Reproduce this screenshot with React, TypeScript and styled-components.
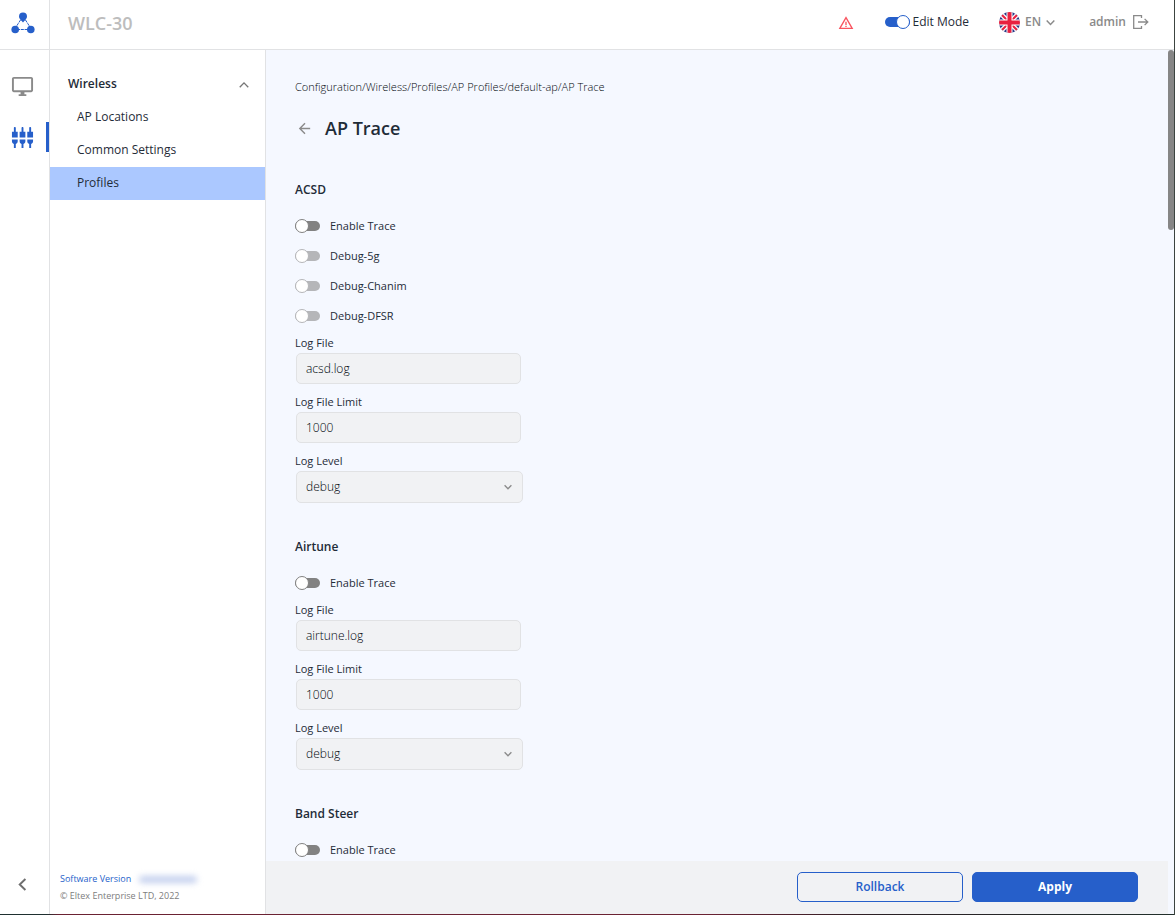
import React, { useState } from 'react';
import styled, { createGlobalStyle, css } from 'styled-components';
import {
  MdArrowBack,
  MdOutlineDesktopWindows,
  MdSettingsInputComponent,
  MdWarningAmber,
} from 'react-icons/md';

const color = {
  blue: '#265fca',
  ink: '#1f2c38',
  deepInk: '#00060c',
  grey: '#8a8a8a',
  line: '#e1e2e4',
  canvas: '#f5f8ff',
  field: '#f1f2f4',
  selected: '#abc8ff',
};

const GlobalStyle = createGlobalStyle`
  *, *::before, *::after { box-sizing: border-box; }
  body {
    margin: 0;
    background: #fff;
    color: ${color.ink};
    font-family: 'Open Sans', 'Noto Sans', sans-serif;
    font-size: 12px;
    line-height: 16px;
  }
  button, input, select { font: inherit; color: inherit; }
`;

const Frame = styled.div`
  display: flex;
  flex-direction: column;
  height: 100vh;
  border-right: 1px solid #3c4440;
`;

const WindowEdge = styled.div`
  flex: none;
  height: 1px;
  background: linear-gradient(90deg, #1f3030 0, #1f3030 4%, #6b2233 5%, #6b2233 60%, #2a2024 75%, #22302c 100%);
`;

const Header = styled.header`
  flex: none;
  display: flex;
  height: 50px;
  border-bottom: 1px solid ${color.line};
`;

const LogoCell = styled.a`
  display: flex;
  align-items: center;
  justify-content: center;
  width: 50px;
  padding: 0 4px 3px 0;
  border-right: 1px solid ${color.line};
`;

const Product = styled.div`
  flex: 1;
  padding: 11px 0 0 18px;
  color: #bdbdbd;
  font-size: 18px;
  font-weight: 600;
  line-height: 24px;
`;

const HeaderTools = styled.div`
  display: flex;
  align-items: center;
  height: 44px;
  padding-right: 25px;
`;

const AlertButton = styled.button`
  display: flex;
  margin-right: 31px;
  padding: 2px 0 0;
  border: 0;
  background: none;
  color: #f9545f;
`;

const EditMode = styled.label`
  display: flex;
  align-items: center;
  gap: 3px;
  margin-right: 30px;
`;

const ToolButton = styled.button`
  display: flex;
  align-items: center;
  gap: 5px;
  padding: 0;
  border: 0;
  background: none;
  color: ${color.grey};
  font-size: 12px;
  font-weight: 600;
`;

const LanguageButton = styled(ToolButton)`
  margin-right: 34px;
`;

const LogoutButton = styled(ToolButton)`
  gap: 7px;
`;

const Body = styled.div`
  flex: 1;
  display: flex;
  min-height: 0;
`;

const Rail = styled.nav`
  flex: none;
  display: flex;
  flex-direction: column;
  width: 50px;
  padding-top: 21px;
  border-right: 1px solid ${color.line};
`;

const RailLink = styled.a<{ $active?: boolean }>`
  display: flex;
  align-items: center;
  justify-content: center;
  height: 30px;
  margin-bottom: 21px;
  padding-right: ${(p) => (p.$active ? 1 : 4)}px;
  color: ${(p) => (p.$active ? color.blue : color.grey)};
  ${(p) =>
    p.$active &&
    css`
      border-right: 3px solid ${color.blue};
      border-radius: 2px 0 0 2px;
    `}
`;

const CollapseButton = styled.button`
  display: flex;
  justify-content: center;
  margin: auto 0 23px;
  padding: 0 4px 0 0;
  border: 0;
  background: none;
  color: #6f6f6f;
`;

const Sidebar = styled.aside`
  flex: none;
  display: flex;
  flex-direction: column;
  width: 216px;
  padding-top: 18px;
  border-right: 1px solid ${color.line};
`;

const GroupButton = styled.button`
  display: flex;
  align-items: center;
  justify-content: space-between;
  height: 33px;
  padding: 0 16px 2px 18px;
  border: 0;
  background: none;
  font-weight: 600;
  text-align: left;

  svg {
    margin-top: 2px;
    color: #777;
  }
`;

const MenuLink = styled.a<{ $active?: boolean }>`
  display: flex;
  align-items: center;
  height: 33px;
  padding: 0 27px 2px;
  background: ${(p) => (p.$active ? color.selected : 'transparent')};
  color: inherit;
  text-decoration: none;
`;

const About = styled.div`
  margin-top: auto;
  padding: 0 10px 10px;
  color: #7d7d7d;
  font-size: 9px;
`;

const Version = styled.div`
  display: flex;
  align-items: center;
  gap: 8px;
  margin-bottom: 1px;
  color: ${color.blue};
  font-weight: 500;
`;

const HiddenBuild = styled.span`
  width: 58px;
  height: 7px;
  border-radius: 4px;
  background: #c3cfee;
  filter: blur(3px);
`;

const Main = styled.main`
  flex: 1;
  display: flex;
  flex-direction: column;
  min-width: 0;
  background: ${color.canvas};
`;

const Content = styled.div`
  flex: 1;
  min-height: 0;
  overflow: hidden;
  padding: 29px 29px 0;
`;

const Breadcrumbs = styled.nav`
  color: ${color.deepInk};
  font-size: 11px;
  font-weight: 300;

  a {
    color: inherit;
    text-decoration: none;
  }
`;

const TitleRow = styled.div`
  display: flex;
  align-items: center;
  gap: 12px;
  margin-top: 21px;
`;

const BackLink = styled.a`
  display: flex;
  padding-left: 1px;
  color: ${color.grey};
`;

const Title = styled.h1`
  margin: 0;
  font-size: 18px;
  font-weight: 600;
  line-height: 24px;
`;

const Section = styled.section`
  margin-top: 36px;
`;

const FirstSection = styled(Section)`
  margin-top: 42px;
`;

const SectionTitle = styled.h2`
  margin: 0 0 13px;
  font-size: 12px;
  font-weight: 600;
  line-height: 16px;
`;

const SwitchRow = styled.label`
  display: flex;
  align-items: center;
  gap: 10px;
  height: 30px;
  font-size: 11px;
  font-weight: 500;
`;

const Switch = styled.input`
  appearance: none;
  flex: none;
  display: grid;
  align-items: center;
  width: 25px;
  height: 14px;
  margin: 0;
  color: #828282;

  &::before,
  &::after {
    content: '';
    grid-area: 1 / 1;
  }
  &::before {
    height: 10px;
    border-radius: 5px;
    background: currentColor;
  }
  &::after {
    width: 14px;
    height: 14px;
    border: 1px solid currentColor;
    border-radius: 50%;
    background: #fff;
  }
  &:checked {
    color: ${color.blue};
  }
  &:checked::after {
    justify-self: end;
  }
  &:disabled {
    color: #b5b6b9;
  }
`;

const Fields = styled.div`
  padding-top: 4px;
`;

const Field = styled.div`
  display: flex;
  flex-direction: column;
  margin-bottom: 10px;
`;

const FieldLabel = styled.label`
  margin-bottom: 2px;
  font-size: 11px;
  font-weight: 500;
`;

const controlStyle = css`
  height: 31px;
  padding: 0 9px;
  border: 1px solid ${color.line};
  border-radius: 5px;
  background: ${color.field};
  color: ${color.deepInk};
  font-weight: 300;
`;

const TextInput = styled.input`
  ${controlStyle}
  width: 225px;
  margin: 0 0 0 1px;
`;

const SelectBox = styled.div`
  position: relative;
  width: 227px;
  margin-left: 1px;

  svg {
    position: absolute;
    top: 12px;
    right: 11px;
    color: ${color.grey};
    pointer-events: none;
  }
`;

const Select = styled.select`
  ${controlStyle}
  appearance: none;
  width: 100%;
  height: 32px;
`;

const Footer = styled.footer`
  flex: none;
  display: flex;
  justify-content: flex-end;
  gap: 9px;
  height: 53px;
  padding: 11px 30px 0 0;
  background: ${color.field};
`;

const ActionButton = styled.button<{ $primary?: boolean }>`
  width: 166px;
  height: 30px;
  padding: 0;
  border: 1px solid ${color.blue};
  border-radius: 5px;
  background: ${(p) => (p.$primary ? color.blue : 'transparent')};
  color: ${(p) => (p.$primary ? '#fff' : color.blue)};
  font-weight: ${(p) => (p.$primary ? 700 : 600)};
`;

const ScrollTrack = styled.div`
  flex: none;
  width: 6px;
  background: ${color.canvas};
`;

const ScrollThumb = styled.div`
  height: 180px;
  border-radius: 3px;
  background: #868686;
`;

const Logo = () => (
  <svg width="24" height="22" viewBox="0 0 24 22" aria-hidden="true">
    <g stroke={color.blue} strokeWidth="1" fill="none">
      <path d="M9.500 8L5 15M14.500 8l4.500 7M6 17.500h12" strokeDasharray="3 .8" />
    </g>
    <g fill={color.blue}>
      <path d="M12 .5a4 4 0 0 1 4 4c0 1.800-1.200 3-2.700 4.500L12 10.500 10.700 9C9.200 7.500 8 6.300 8 4.500a4 4 0 0 1 4-4z" />
      <circle cx="4.200" cy="17.500" r="3.800" />
      <circle cx="19.800" cy="17.500" r="3.800" />
    </g>
  </svg>
);

const Flag = () => (
  <svg width="21" height="21" viewBox="0 0 42 42" aria-hidden="true">
    <clipPath id="flag-disc">
      <circle cx="21" cy="21" r="21" />
    </clipPath>
    <g clipPath="url(#flag-disc)">
      <path fill="#2b3a86" d="M0 0h42v42H0z" />
      <path stroke="#fff" strokeWidth="9" d="M0 0l42 42M42 0L0 42" />
      <path stroke="#e8203f" strokeWidth="4" d="M0 0l42 42M42 0L0 42" />
      <path stroke="#fff" strokeWidth="12" d="M21 0v42M0 21h42" />
      <path stroke="#e8203f" strokeWidth="8" d="M21 0v42M0 21h42" />
    </g>
  </svg>
);

const Chevron = ({ turn = 0, width = 8, weight = 1.3 }: { turn?: number; width?: number; weight?: number }) => (
  <svg
    width={width}
    height={width}
    viewBox="0 0 8 8"
    fill="none"
    stroke="currentColor"
    strokeWidth={weight}
    transform={`rotate(${turn})`}
    aria-hidden="true"
  >
    <path d="M.6 2.200L4 5.700l3.400-3.500" />
  </svg>
);

const LogoutIcon = () => (
  <svg width="16" height="14" viewBox="0 0 16 14" fill="none" stroke="currentColor" strokeWidth="1.300" aria-hidden="true">
    <path d="M8.500 3V.7H.7v12.600h7.800V11M5 7h9.600M11.600 3.900L14.800 7l-3.200 3.100" />
  </svg>
);

type TraceSection = {
  title: string;
  debug: string[];
  logFile?: string;
};

const sections: TraceSection[] = [
  { title: 'ACSD', debug: ['Debug-5g', 'Debug-Chanim', 'Debug-DFSR'], logFile: 'acsd.log' },
  { title: 'Airtune', debug: [], logFile: 'airtune.log' },
  { title: 'Band Steer', debug: [] },
];

const crumbs = ['Configuration', 'Wireless', 'Profiles', 'AP Profiles', 'default-ap', 'AP Trace'];

const TraceForm = ({ section, first }: { section: TraceSection; first: boolean }) => {
  const [enabled, setEnabled] = useState(false);
  const id = section.title.toLowerCase().replace(' ', '-');
  const Wrapper = first ? FirstSection : Section;
  return (
    <Wrapper>
      <SectionTitle>{section.title}</SectionTitle>
      <SwitchRow>
        <Switch type="checkbox" checked={enabled} onChange={(e) => setEnabled(e.target.checked)} />
        Enable Trace
      </SwitchRow>
      {section.debug.map((name) => (
        <SwitchRow key={name}>
          <Switch type="checkbox" disabled={!enabled} />
          {name}
        </SwitchRow>
      ))}
      {section.logFile && (
        <Fields>
          <Field>
            <FieldLabel htmlFor={`${id}-file`}>Log File</FieldLabel>
            <TextInput id={`${id}-file`} defaultValue={section.logFile} />
          </Field>
          <Field>
            <FieldLabel htmlFor={`${id}-limit`}>Log File Limit</FieldLabel>
            <TextInput id={`${id}-limit`} defaultValue="1000" />
          </Field>
          <Field>
            <FieldLabel htmlFor={`${id}-level`}>Log Level</FieldLabel>
            <SelectBox>
              <Select id={`${id}-level`} defaultValue="debug">
                <option>debug</option>
              </Select>
              <Chevron />
            </SelectBox>
          </Field>
        </Fields>
      )}
    </Wrapper>
  );
};

export default function App() {
  const [editing, setEditing] = useState(true);
  return (
    <>
      <GlobalStyle />
      <Frame>
        <Header>
          <LogoCell href="#" aria-label="Home">
            <Logo />
          </LogoCell>
          <Product>WLC-30</Product>
          <HeaderTools>
            <AlertButton aria-label="Alerts">
              <MdWarningAmber size={16} />
            </AlertButton>
            <EditMode>
              <Switch type="checkbox" checked={editing} onChange={(e) => setEditing(e.target.checked)} />
              Edit Mode
            </EditMode>
            <LanguageButton>
              <Flag />
              EN
              <Chevron width={9} />
            </LanguageButton>
            <LogoutButton>
              admin
              <LogoutIcon />
            </LogoutButton>
          </HeaderTools>
        </Header>
        <Body>
          <Rail>
            <RailLink href="#" aria-label="Monitoring">
              <MdOutlineDesktopWindows size={23} />
            </RailLink>
            <RailLink href="#" aria-label="Configuration" $active>
              <MdSettingsInputComponent size={23} />
            </RailLink>
            <CollapseButton aria-label="Collapse menu">
              <Chevron turn={90} width={13} weight={1.2} />
            </CollapseButton>
          </Rail>
          <Sidebar>
            <GroupButton>
              Wireless
              <Chevron turn={180} width={10} weight={1.1} />
            </GroupButton>
            <MenuLink href="#">AP Locations</MenuLink>
            <MenuLink href="#">Common Settings</MenuLink>
            <MenuLink href="#" $active>
              Profiles
            </MenuLink>
            <About>
              <Version>
                Software Version
                <HiddenBuild />
              </Version>
              © Eltex Enterprise LTD, 2022
            </About>
          </Sidebar>
          <Main>
            <Content>
              <Breadcrumbs>
                {crumbs.map((name, i) => (
                  <React.Fragment key={name}>
                    {i > 0 && '/'}
                    <a href="#">{name}</a>
                  </React.Fragment>
                ))}
              </Breadcrumbs>
              <TitleRow>
                <BackLink href="#" aria-label="Back">
                  <MdArrowBack size={17} />
                </BackLink>
                <Title>AP Trace</Title>
              </TitleRow>
              {sections.map((section, i) => (
                <TraceForm key={section.title} section={section} first={i === 0} />
              ))}
            </Content>
            <Footer>
              <ActionButton>Rollback</ActionButton>
              <ActionButton $primary>Apply</ActionButton>
            </Footer>
          </Main>
          <ScrollTrack>
            <ScrollThumb />
          </ScrollTrack>
        </Body>
        <WindowEdge />
      </Frame>
    </>
  );
}
